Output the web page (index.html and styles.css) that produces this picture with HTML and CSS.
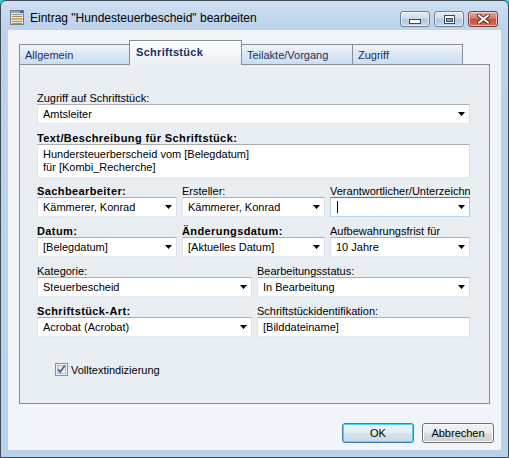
FILE: index.html
```html
<!DOCTYPE html>
<html lang="de">
<head>
<meta charset="utf-8">
<title>Eintrag bearbeiten</title>
<link rel="stylesheet" href="styles.css">
</head>
<body>
<div class="window">
  <div class="titlebar">
    <svg class="appicon" width="14" height="15" viewBox="0 0 14 15">
      <rect x="0.5" y="0.5" width="13" height="14" fill="#e9e9e9" stroke="#7b7b7b"/>
      <rect x="1" y="1" width="12" height="2" fill="#9aa3ad"/>
      <rect x="10" y="1" width="3" height="2" fill="#2f62b0"/>
      <rect x="2" y="4" width="10" height="1" fill="#8d8d8d"/>
      <rect x="2" y="6" width="10" height="1" fill="#8d8d8d"/>
      <rect x="1" y="8" width="12" height="2" fill="#f0a33a"/>
      <rect x="2" y="11" width="10" height="1" fill="#8d8d8d"/>
      <rect x="2" y="13" width="10" height="1" fill="#8d8d8d"/>
    </svg>
    <span class="title">Eintrag "Hundesteuerbescheid" bearbeiten</span>
    <div class="capbtns">
      <div class="cbtn">
        <svg width="12" height="5" viewBox="0 0 12 5"><rect x="0.5" y="0.5" width="11" height="4" fill="#fff" stroke="#3a4a5c"/></svg>
      </div>
      <div class="cbtn">
        <svg width="11" height="9" viewBox="0 0 11 9"><rect x="0.5" y="0.5" width="10" height="8" fill="#fff" stroke="#3a4a5c"/><rect x="2.5" y="3.5" width="6" height="3" fill="#8ea3bb" stroke="#3a4a5c"/></svg>
      </div>
      <div class="cbtn close">
        <svg width="13" height="10" viewBox="0 0 13 10">
          <path d="M2 1.5 L11 8.5 M11 1.5 L2 8.5" stroke="#5a2018" stroke-width="4" stroke-linecap="square"/>
          <path d="M2 1.5 L11 8.5 M11 1.5 L2 8.5" stroke="#ffffff" stroke-width="2" stroke-linecap="square"/>
        </svg>
      </div>
    </div>
  </div>
  <div class="client">
    <div class="tabs">
      <div class="tab">Allgemein</div>
      <div class="tab active">Schriftstück</div>
      <div class="tab">Teilakte/Vorgang</div>
      <div class="tab">Zugriff</div>
    </div>
    <div class="panel">
      <div class="field first">
        <div class="lbl">Zugriff auf Schriftstück:</div>
        <div class="combo"><span class="val">Amtsleiter</span><i class="arrow"></i></div>
      </div>
      <div class="field">
        <div class="lbl b">Text/Beschreibung für Schriftstück:</div>
        <div class="textarea">Hundersteuerberscheid vom [Belegdatum]<br>für [Kombi_Recherche]</div>
      </div>
      <div class="row3 after-text">
        <div class="field">
          <div class="lbl b">Sachbearbeiter:</div>
          <div class="combo"><span class="val">Kämmerer, Konrad</span><i class="arrow"></i></div>
        </div>
        <div class="field">
          <div class="lbl">Ersteller:</div>
          <div class="combo"><span class="val">Kämmerer, Konrad</span><i class="arrow"></i></div>
        </div>
        <div class="field">
          <div class="lbl">Verantwortlicher/Unterzeichne</div>
          <div class="combo focus"><span class="val"><i class="caret"></i></span><i class="arrow"></i></div>
        </div>
      </div>
      <div class="row3">
        <div class="field">
          <div class="lbl b">Datum:</div>
          <div class="combo"><span class="val">[Belegdatum]</span><i class="arrow"></i></div>
        </div>
        <div class="field">
          <div class="lbl b">Änderungsdatum:</div>
          <div class="combo"><span class="val">[Aktuelles Datum]</span><i class="arrow"></i></div>
        </div>
        <div class="field">
          <div class="lbl">Aufbewahrungsfrist für</div>
          <div class="combo"><span class="val">10 Jahre</span><i class="arrow"></i></div>
        </div>
      </div>
      <div class="row2">
        <div class="field">
          <div class="lbl">Kategorie:</div>
          <div class="combo"><span class="val">Steuerbescheid</span><i class="arrow"></i></div>
        </div>
        <div class="field">
          <div class="lbl">Bearbeitungsstatus:</div>
          <div class="combo"><span class="val">In Bearbeitung</span><i class="arrow"></i></div>
        </div>
      </div>
      <div class="row2">
        <div class="field">
          <div class="lbl b">Schriftstück-Art:</div>
          <div class="combo"><span class="val">Acrobat (Acrobat)</span><i class="arrow"></i></div>
        </div>
        <div class="field">
          <div class="lbl">Schriftstückidentifikation:</div>
          <div class="combo"><span class="val">[Bilddateiname]</span></div>
        </div>
      </div>
      <div class="check">
        <svg class="cbox" width="13" height="13" viewBox="0 0 13 13">
          <defs><linearGradient id="cg" x1="0" y1="0" x2="1" y2="1"><stop offset="0" stop-color="#dcdcdc"/><stop offset="1" stop-color="#fbfbfb"/></linearGradient></defs>
          <rect x="0.5" y="0.5" width="12" height="12" fill="#f4f4f4" stroke="#8e8f8f"/>
          <rect x="2.5" y="2.5" width="8" height="8" fill="url(#cg)" stroke="#b8bcc2"/>
          <path d="M3.2 6.3 L5.3 9 L9.8 2.6" fill="none" stroke="#4a5f97" stroke-width="1.7"/>
        </svg>
        <span>Volltextindizierung</span>
      </div>
    </div>
    <div class="buttons">
      <div class="btn default">OK</div>
      <div class="btn">Abbrechen</div>
    </div>
  </div>
</div>
</body>
</html>
```
FILE: styles.css
```css
* { box-sizing: border-box; }
html, body { margin: 0; padding: 0; }
body {
  width: 509px;
  height: 458px;
  overflow: hidden;
  background: #3ec4d8;
  font-family: "Liberation Sans", Arial, sans-serif;
  font-size: 11px;
  color: #000;
}
.window {
  width: 509px;
  height: 458px;
  border: 1px solid #3f4b59;
  border-radius: 6px 6px 0 0;
  background: linear-gradient(to bottom, #cedff2 0px, #bcd3eb 28px, #b9d1ea 100%);
  padding: 0 7px 7px 7px;
  display: flex;
  flex-direction: column;
}
.titlebar {
  height: 29px;
  display: flex;
  align-items: flex-start;
  padding: 0 3px 0 2px;
}
.appicon { margin-top: 9px; flex: none; }
.title {
  margin-top: 10px;
  margin-left: 6px;
  font-size: 12px;
  line-height: 14px;
  color: #000;
  white-space: nowrap;
}
.capbtns {
  margin-left: auto;
  margin-top: 10px;
  display: flex;
  gap: 4px;
}
.cbtn {
  width: 30px;
  height: 16px;
  border: 1px solid #6b819b;
  border-radius: 3px;
  background: linear-gradient(to bottom, #e4edf7 0%, #cfdcea 45%, #b5c8de 50%, #c6d6e9 100%);
  box-shadow: inset 0 0 0 1px rgba(255,255,255,0.55);
  display: flex;
  align-items: center;
  justify-content: center;
}
.cbtn:first-child svg { margin-top: 5px; }
.cbtn.close {
  border-color: #7e3a30;
  background: linear-gradient(to bottom, #e9a99d 0%, #d77a69 45%, #c4503d 50%, #d26d58 100%);
}
.client {
  flex: 1;
  background: #f1f5fa;
  display: flex;
  flex-direction: column;
}
.tabs {
  display: flex;
  margin: 10px 0 0 11px;
  height: 24px;
  align-items: flex-end;
  position: relative;
  z-index: 1;
}
.tab {
  width: 111px;
  height: 20px;
  border: 1px solid #898c95;
  border-bottom: none;
  margin-left: -1px;
  padding-left: 5px;
  display: flex;
  align-items: center;
  color: #1c2f55;
  background: linear-gradient(to bottom, #f0f5fb 0%, #dbe7f5 50%, #cddef1 100%);
}
.tab:first-child { margin-left: 0; }
.tab.active {
  width: 113px;
  height: 25px;
  margin-bottom: -1px;
  padding-left: 6px;
  padding-bottom: 3px;
  font-weight: bold;
  letter-spacing: 0.3px;
  color: #1b2e5e;
  background: linear-gradient(to bottom, #ffffff 0%, #f4f7fa 50%, #e9eef3 100%);
}
.tab:nth-child(3) { width: 112px; }
.panel {
  margin-left: 11px;
  width: 471px;
  height: 340px;
  border: 1px solid #898c95;
  background: #e9eef3;
  padding: 28px 19px 0 17px;
  display: flex;
  flex-direction: column;
}
.field { display: flex; flex-direction: column; min-width: 0; }
.panel > .field, .row3, .row2 { margin-top: 9px; }
.panel > .field.first { margin-top: 0; }
.panel > .row3.after-text { margin-top: 8px; }
.lbl {
  height: 11px;
  line-height: 11px;
  white-space: nowrap;
  overflow-x: clip;
  overflow-y: visible;
}
.lbl.b { font-weight: bold; letter-spacing: 0.4px; }
.combo, .textarea {
  background: #fff;
  border: 1px solid;
  border-color: #abadb3 #dbdfe6 #e3e9ef #e2e3ea;
}
.combo {
  height: 20px;
  display: flex;
  align-items: center;
  justify-content: space-between;
  padding-left: 5px;
}
.combo .val { white-space: nowrap; overflow: hidden; display: flex; align-items: center; }
.arrow {
  flex: none;
  width: 7px;
  height: 4px;
  margin-right: 4px;
  background: #000;
  clip-path: polygon(0 0, 100% 0, 50% 100%);
}
.combo.focus { border-color: #3d7bad #a4c9e3 #b7d9ed #b5cfe7; }
.caret {
  display: block;
  width: 1px;
  height: 12px;
  background: #000;
  margin-left: 1px;
}
.textarea {
  height: 34px;
  padding: 3px 5px 0 5px;
  line-height: 13px;
}
.row3 {
  display: grid;
  grid-template-columns: 140px 143px 140px;
  column-gap: 5px;
}
.row2 {
  display: grid;
  grid-template-columns: 215px 213px;
  column-gap: 5px;
}
.check {
  margin-top: 26px;
  margin-left: 18px;
  display: flex;
  align-items: center;
  gap: 3px;
  height: 13px;
}
.cbox { flex: none; }
.buttons {
  display: flex;
  justify-content: flex-end;
  gap: 8px;
  margin-top: 19px;
  padding-right: 7px;
}
.btn {
  width: 72px;
  height: 20px;
  border: 1px solid #707070;
  border-radius: 3px;
  background: linear-gradient(to bottom, #f2f2f2 0%, #ebebeb 50%, #dddddd 50%, #cfcfcf 100%);
  box-shadow: inset 0 0 0 1px #fcfcfc;
  display: flex;
  align-items: center;
  justify-content: center;
}
.btn.default {
  border-color: #3c7fb1;
  box-shadow: inset 0 0 0 1px #48d8fb;
  background: linear-gradient(to bottom, #eaf6fd 0%, #e3eff7 50%, #d4e3ee 50%, #c9d9e6 100%);
}
```
